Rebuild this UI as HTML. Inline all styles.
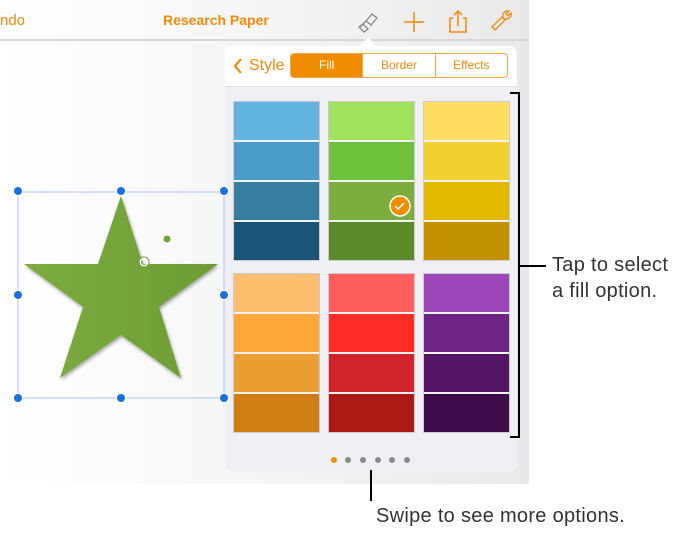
<!DOCTYPE html>
<html><head><style>
body{margin:0;width:678px;height:534px;background:#fff;position:relative;overflow:hidden;font-family:"Liberation Sans",sans-serif}
.bg{position:absolute;left:0;top:0;width:529px;height:484px;background:linear-gradient(90deg,#fff 0%,#fafafa 30%,#e9e9e9 100%)}
.nav{position:absolute;left:0;top:39px;width:529px;height:2px;background:#d6d6d6}
.t{position:absolute;color:#ee8a0c;font-size:15px;font-weight:bold}
.pop{position:absolute;left:225px;top:46px;width:292px;height:426px;background:#efeff4;border-radius:8px;overflow:hidden}
.pophead{position:absolute;left:0;top:0;width:292px;height:40px;background:#fff;border-bottom:1px solid #ddd}
.seg{position:absolute;left:65px;top:7px;width:218px;height:25px;border:1px solid #f0a54a;border-radius:4px;display:flex;overflow:hidden;box-sizing:border-box}
.seg div{flex:1;text-align:center;font-size:12px;line-height:23px;color:#ee8a0c;border-left:1px solid #f0a54a}
.seg div:first-child{background:#ef8c00;color:#fff;border:none}
.col{position:absolute;width:87px;border:1px solid rgba(0,0,0,.15);box-sizing:border-box}
.col div{height:38px;border-bottom:2px solid #f2f2f2}
.col div:last-child{height:38px;border:none}
.dot{position:absolute;top:457px;width:6px;height:6px;border-radius:50%;background:#8a8a8a}
.h{position:absolute;width:8px;height:8px;border-radius:50%;background:#1a6fd8;border:1px solid #fff}
.lbl{position:absolute;font-size:20px;color:#333;letter-spacing:0.3px;white-space:nowrap}
</style></head><body>
<div class="bg"></div>
<div class="nav"></div>
<div class="t" style="left:0;top:12px;font-weight:normal">ndo</div>
<div class="t" style="left:163px;top:12px;font-size:14px">Research Paper</div>
<svg style="position:absolute;left:350px;top:8px" width="180" height="40" viewBox="350 8 180 40">
<path d="M360 27 l6-6 m-3 3 l5 5 l-4 3 l-5-5z M366 21 l6-7 l5 4 l-6 7z" fill="none" stroke="#888" stroke-width="1.3"/>
<path d="M414 12 v20 M404 22 h20" stroke="#ee8a0c" stroke-width="1.5"/>
<path d="M453 18 h-3 v14 h16 v-14 h-3 M458 26 v-15 M454 15 l4-4 4 4" fill="none" stroke="#ee8a0c" stroke-width="1.5"/>
<path d="M495 30 l10-10 a5 5 0 0 1 4-9 l-3 3 2 2 3-3 a5 5 0 0 1-9 4 l-10 10z" fill="none" stroke="#ee8a0c" stroke-width="1.3"/>
<path d="M360 46 l8-9 8 9z" fill="#fff"/>
</svg>
<div class="pop">
<div class="pophead">
<svg style="position:absolute;left:8px;top:12px" width="10" height="16"><path d="M8 1 L2 8 L8 15" fill="none" stroke="#ee8a0c" stroke-width="2.2"/></svg>
<div style="position:absolute;left:24px;top:11px;font-size:16px;color:#ee8a0c">Style</div>
<div class="seg"><div>Fill</div><div>Border</div><div>Effects</div></div>
</div>
</div>
<div class="col" style="left:233px;top:101px"><div style="background:#62b3df"></div><div style="background:#4a9bc9"></div><div style="background:#367da0"></div><div style="background:#1a5577"></div></div>
<div class="col" style="left:328px;top:101px"><div style="background:#a0e25c"></div><div style="background:#6ec13b"></div><div style="background:#7bad3f"></div><div style="background:#5b8a29"></div></div>
<div class="col" style="left:423px;top:101px"><div style="background:#ffdf62"></div><div style="background:#f1d230"></div><div style="background:#e1b900"></div><div style="background:#c39100"></div></div>
<div class="col" style="left:233px;top:273px"><div style="background:#ffbf6f"></div><div style="background:#ffa83a"></div><div style="background:#eb9e31"></div><div style="background:#d07d14"></div></div>
<div class="col" style="left:328px;top:273px"><div style="background:#ff5e5e"></div><div style="background:#ff2d25"></div><div style="background:#d1232d"></div><div style="background:#ab1816"></div></div>
<div class="col" style="left:423px;top:273px"><div style="background:#9b47b7"></div><div style="background:#6c2383"></div><div style="background:#551566"></div><div style="background:#3e0c48"></div></div>
<svg style="position:absolute;left:389px;top:195px" width="22" height="22"><circle cx="11" cy="11" r="10" fill="#ef8c00" stroke="#fff" stroke-width="1.5"/><path d="M6 11 l3 3 6-6" fill="none" stroke="#fff" stroke-width="1.5"/></svg>
<div class="dot" style="left:331px;background:#ef8c00"></div><div class="dot" style="left:345px"></div><div class="dot" style="left:360px"></div><div class="dot" style="left:375px"></div><div class="dot" style="left:389px"></div><div class="dot" style="left:404px"></div>
<svg style="position:absolute;left:0;top:0" width="678" height="534">
<defs><filter id="s"><feDropShadow dx="1" dy="2" stdDeviation="1.5" flood-opacity=".35"/></filter>
<linearGradient id="g" x1="0" x2="1"><stop offset="0" stop-color="#7cad3e"/><stop offset="1" stop-color="#6e9b36"/></linearGradient></defs>
<rect x="18" y="192" width="206" height="206" fill="none" stroke="#a9c4f0" stroke-width="1"/>
<path d="M121 196 L143 264 L218 264 L159 307 L181 378 L121 335 L60 378 L83 307 L24 264 L98 264Z" fill="url(#g)" filter="url(#s)"/>
<circle cx="167" cy="239" r="4" fill="#6ea636" stroke="#fff"/>
<circle cx="144" cy="262" r="4" fill="none" stroke="#fff" stroke-width="2"/><circle cx="144" cy="262" r="5" fill="none" stroke="#6ea636" stroke-width="1"/>
<path d="M510 93 H519 V437 H510 M519 266 H546 M371 470 V501" fill="none" stroke="#000" stroke-width="2"/>
</svg>
<div class="h" style="left:13px;top:186px"></div><div class="h" style="left:116px;top:186px"></div><div class="h" style="left:219px;top:186px"></div>
<div class="h" style="left:13px;top:290px"></div><div class="h" style="left:219px;top:290px"></div>
<div class="h" style="left:13px;top:393px"></div><div class="h" style="left:116px;top:393px"></div><div class="h" style="left:219px;top:393px"></div>
<div class="lbl" style="left:552px;top:254px">Tap to select</div>
<div class="lbl" style="left:552px;top:280px">a fill option.</div>
<div class="lbl" style="left:376px;top:505px">Swipe to see more options.</div>
</body></html>
